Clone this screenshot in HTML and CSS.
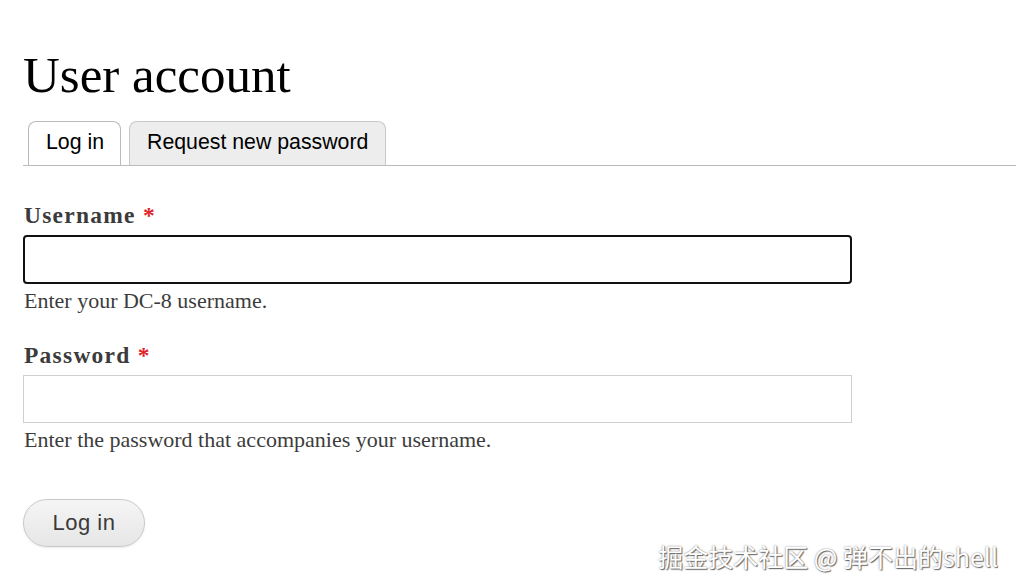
FILE: index.html
```html
<!DOCTYPE html>
<html lang="en">
<head>
<meta charset="utf-8">
<title>User account</title>
<link rel="stylesheet" href="styles.css">
</head>
<body>
<main class="page">
  <h1 class="title">User account</h1>
  <nav class="tabs">
    <a class="tab tab-active" href="#">Log in</a>
    <a class="tab" href="#">Request new password</a>
  </nav>
  <form class="form">
    <div class="field">
      <label class="label" for="name">Username <span class="req">*</span></label>
      <input class="input input-focus" id="name" type="text">
      <div class="desc">Enter your DC-8 username.</div>
    </div>
    <div class="field">
      <label class="label" for="pass">Password <span class="req">*</span></label>
      <input class="input" id="pass" type="password">
      <div class="desc">Enter the password that accompanies your username.</div>
    </div>
    <button class="btn" type="button">Log in</button>
  </form>
</main>
<div class="watermark">掘金技术社区 @ 弹不出的shell</div>
</body>
</html>
```
FILE: styles.css
```css
html, body {
  margin: 0;
  padding: 0;
  background: #fff;
  overflow: hidden;
}
body {
  width: 1016px;
  height: 588px;
  position: relative;
}
.page {
  padding-left: 23px;
}
.title {
  margin: 50px 0 0 0;
  font-family: "Liberation Serif", serif;
  font-weight: normal;
  font-size: 51px;
  line-height: 50px;
  color: #000;
}
.tabs {
  margin-top: 21px;
  display: flex;
  gap: 8px;
  padding-left: 5px;
  border-bottom: 1px solid #bbb;
}
.tab {
  box-sizing: border-box;
  height: 44px;
  display: flex;
  align-items: center;
  padding: 0 17px 2px 17px;
  border: 1px solid #c8c8c8;
  border-bottom: none;
  border-radius: 8px 8px 0 0;
  background: #ededed;
  font-family: "Liberation Sans", Arial, sans-serif;
  font-size: 21.3px;
  color: #000;
  text-decoration: none;
}
.tab-active {
  background: #fff;
  border-color: #bbb;
  padding: 0 16px 2px 17px;
}
.form {
  padding-top: 36px;
  display: flex;
  flex-direction: column;
  align-items: flex-start;
}
.field {
  display: flex;
  flex-direction: column;
  margin-bottom: 28px;
}
.label {
  font-family: "Liberation Serif", serif;
  font-weight: bold;
  font-size: 23.5px;
  line-height: 26px;
  letter-spacing: 1.25px;
  color: #3b3b3b;
  padding-left: 1px;
}
.req {
  color: #e0262b;
  letter-spacing: 0;
}
.input {
  box-sizing: border-box;
  margin: 7px 0 0 0;
  width: 829px;
  height: 48px;
  border: 1px solid #cfcfcf;
  border-radius: 0;
  background: #fff;
  outline: none;
  font-size: 18px;
}
.input-focus {
  border: 2px solid #111;
  border-radius: 4px;
  height: 49px;
}
.desc {
  margin-top: 4px;
  font-family: "Liberation Serif", serif;
  font-size: 22px;
  line-height: 26px;
  color: #3c3c3c;
  padding-left: 1px;
}
.field:last-of-type {
  margin-bottom: 45px;
}
.btn {
  box-sizing: border-box;
  width: 122px;
  height: 48px;
  margin-top: 1px;
  border: 1px solid #c9c9c9;
  border-radius: 24px;
  background: linear-gradient(#f5f5f5, #e6e6e6);
  font-family: "Liberation Sans", Arial, sans-serif;
  font-size: 22px;
  letter-spacing: 0.5px;
  color: #3a3a3a;
  padding: 0 0 1px 0;
  box-shadow: 0 1px 2px rgba(0,0,0,0.08);
}
.watermark {
  position: absolute;
  right: 18px;
  bottom: 17px;
  font-family: "Noto Sans CJK SC", "Noto Sans", sans-serif;
  font-size: 25px;
  line-height: 30px;
  color: #fff;
  text-shadow: 1px 1px 1px #666, 0 0 2px rgba(0,0,0,0.5);
}
```
